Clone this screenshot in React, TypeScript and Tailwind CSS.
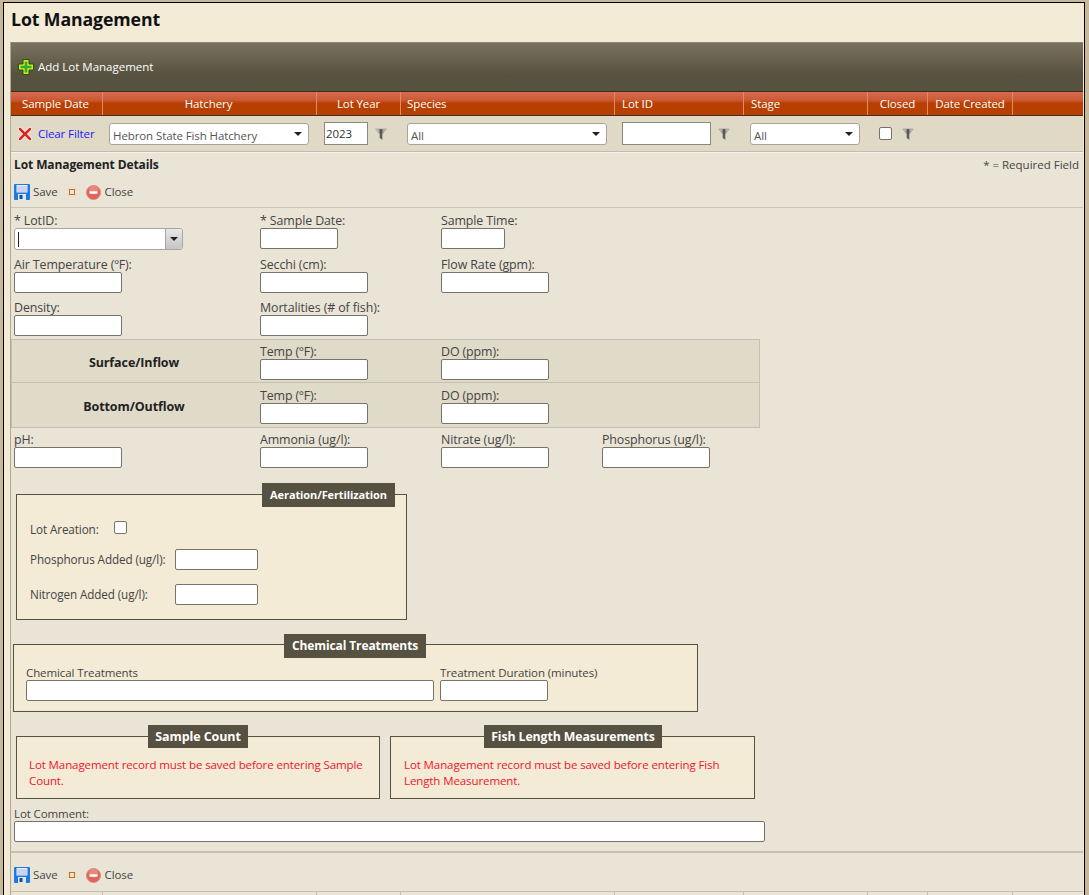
import React from "react";

const font = { fontFamily: '"Open Sans", "Noto Sans", sans-serif', letterSpacing: "-0.1px" };

function Funnel() {
  return (
    <svg width="12" height="12" viewBox="0 0 12 12">
      <defs>
        <linearGradient id="fg" x1="0" x2="1" y1="0" y2="0">
          <stop offset="0" stopColor="#ece8dc" />
          <stop offset="0.3" stopColor="#aaaaaa" />
          <stop offset="0.5" stopColor="#3e3e3e" />
          <stop offset="0.7" stopColor="#aaaaaa" />
          <stop offset="1" stopColor="#e4e0d4" />
        </linearGradient>
      </defs>
      <path d="M0.5 1H11.5L7.2 6V11.5L4.8 10V6Z" fill="url(#fg)" stroke="#8a877d" strokeWidth="0.5" />
    </svg>
  );
}

function SaveIcon() {
  return (
    <svg width="16" height="16" viewBox="0 0 16 16" className="shrink-0">
      <rect x="0" y="0" width="16" height="16" rx="1" fill="#1d7be0" />
      <rect x="2.5" y="1" width="11" height="7.5" fill="#eef1fb" />
      <path d="M3 3h10M3 5h10M3 7h10" stroke="#a9b4e6" strokeWidth="1" />
      <rect x="4" y="10" width="8" height="6" fill="#dfe7f5" />
      <rect x="5.5" y="11" width="3" height="4" fill="#124a9c" />
    </svg>
  );
}

function CloseIcon() {
  return (
    <svg width="15" height="15" viewBox="0 0 15 15" className="shrink-0">
      <circle cx="7.5" cy="7.5" r="7" fill="#e0645a" stroke="#d98a80" strokeWidth="1" />
      <circle cx="7.5" cy="5" r="4.5" fill="#f2a89e" opacity="0.5" />
      <rect x="3.5" y="6.3" width="8" height="2.4" fill="#ffffff" />
    </svg>
  );
}

function Actions() {
  return (
    <div className="flex items-center h-5 text-[#444]">
      <SaveIcon />
      <span className="ml-[3px]">Save</span>
      <span className="ml-[11px] w-[4px] h-[4px] border border-[#d9670f] box-content" />
      <span className="ml-[11px] flex"><CloseIcon /></span>
      <span className="ml-[4px]">Close</span>
    </div>
  );
}

function Caret() {
  return <span className="w-0 h-0 border-l-[4px] border-r-[4px] border-t-[4px] border-l-transparent border-r-transparent border-t-[#222]" />;
}

function Sel({ w, text }: { w: string; text: string }) {
  return (
    <div className={`${w} h-[22px] bg-white border border-[#aaa59a] rounded-[3px] flex items-center justify-between pl-[3px] pr-[6px] text-[#555]`}>
      <span className="pt-[5px] whitespace-nowrap">{text}</span>
      <Caret />
    </div>
  );
}

function Field({ label, w, className = "", small = false }: { label: string; w: string; className?: string; small?: boolean }) {
  return (
    <div className={`flex flex-col ${className}`}>
      <span className={`${small ? "text-[11.5px]" : "text-[12.4px]"} leading-[13px] h-[8px] text-[#444] whitespace-nowrap relative z-10 -translate-y-[6px]`}>{label}</span>
      <Input w={w} />
    </div>
  );
}

function Input({ w }: { w: string }) {
  return <div className={`${w} h-[21px] bg-white border border-[#77736a] rounded-[2px] box-border`} />;
}

function Legend({ text, className }: { text: string; className: string }) {
  return (
    <div className={`absolute bg-[#565140] text-white font-bold flex items-center justify-center whitespace-nowrap ${className}`}>
      {text}
    </div>
  );
}

const headers: [string, string, string][] = [
  ["Sample Date", "w-[92px]", "justify-center pr-[2px]"],
  ["Hatchery", "w-[214px]", "justify-center pr-[2px]"],
  ["Lot Year", "w-[84px]", "justify-center"],
  ["Species", "w-[214px]", "justify-start pl-[6px]"],
  ["Lot ID", "w-[129px]", "justify-start pl-[7px]"],
  ["Stage", "w-[124px]", "justify-start pl-[7px]"],
  ["Closed", "w-[60px]", "justify-center"],
  ["Date Created", "w-[85px]", "justify-center"],
];

export default function App() {
  return (
    <div className="w-[1089px] h-[895px] overflow-hidden bg-[#c7b998] pl-[3px] pt-[2px] text-[11.5px]" style={font}>
      <div className="w-[1082px] h-[893px] border-l border-t border-r border-black bg-[#f3ebd6] overflow-hidden">
        <div className="h-[39px] pl-[7px] pt-[4px] text-[17.7px] leading-[24px] font-bold text-[#111]">Lot Management</div>
        <div className="ml-[6px] w-[1073px] border-l border-[#b0a890]">
          {/* toolbar */}
          <div className="h-[49px] bg-[linear-gradient(#7a7260_0%,#6a6350_30%,#575140_65%,#575140_100%)] border-t border-[#8c8572] flex items-center pl-[7px] text-white">
            <svg width="16" height="16" viewBox="0 0 16 16" className="shrink-0">
              <path d="M5 0.5H11V5H15.5V11H11V15.5H5V11H0.5V5H5Z" fill="#d6e81f" stroke="#24500a" strokeWidth="1" />
              <path d="M6.7 2.5H9.3V6.7H13.5V9.3H9.3V13.5H6.7V9.3H2.5V6.7H6.7Z" fill="#2fae33" />
            </svg>
            <span className="ml-[4px] tracking-normal">Add Lot Management</span>
          </div>
          {/* header */}
          <div className="flex h-[25px] border-y border-[#3f2e20] bg-[linear-gradient(#d56c4c_0%,#cc5a36_35%,#b73f00_50%,#b73f00_100%)] text-white">
            {headers.map(([t, w, a]) => (
              <div key={t} className={`${w} shrink-0 flex items-center ${a} border-r border-[#e08a68] whitespace-nowrap`}>{t}</div>
            ))}
          </div>
          {/* filter */}
          <div className="flex h-[36px] bg-[#e0d9c5] border-b border-[#c0bcb0] items-center">
            <div className="w-[92px] shrink-0 flex items-center pl-[7px] text-[#1a1aff]">
              <svg width="14" height="14" viewBox="0 0 14 14" className="shrink-0">
                <path d="M2 2L12 12M12 2L2 12" stroke="#ffffff" strokeWidth="4" strokeLinecap="round" />
                <path d="M2 2L12 12M12 2L2 12" stroke="#d8281f" strokeWidth="2.6" strokeLinecap="round" />
              </svg>
              <span className="ml-[6px] whitespace-nowrap">Clear Filter</span>
            </div>
            <div className="w-[214px] shrink-0 pl-[6px]"><Sel w="w-[200px]" text="Hebron State Fish Hatchery" /></div>
            <div className="w-[84px] shrink-0 flex items-center pl-[7px]">
              <div className="w-[44px] h-[23px] bg-white border border-[#8c887c] flex items-center pl-[1px] text-[#333]">2023</div>
              <span className="ml-[7px] flex"><Funnel /></span>
            </div>
            <div className="w-[214px] shrink-0 pl-[6px]"><Sel w="w-[200px]" text="All" /></div>
            <div className="w-[129px] shrink-0 flex items-center pl-[7px]">
              <div className="w-[89px] h-[23px] bg-white border border-[#8c887c]" />
              <span className="ml-[7px] flex"><Funnel /></span>
            </div>
            <div className="w-[124px] shrink-0 pl-[6px]"><Sel w="w-[110px]" text="All" /></div>
            <div className="w-[60px] shrink-0 flex items-center pl-[11px]">
              <div className="w-[13px] h-[13px] bg-white border border-[#77736a] rounded-[2px]" />
              <span className="ml-[10px] flex"><Funnel /></span>
            </div>
          </div>
          {/* details */}
          <div className="h-[739px] bg-[#eae4d7] border-t border-[#f6f3ea] pl-[3px] text-[#444]">
            <div className="flex justify-between pr-[4px] pt-[3px] h-[21px] items-center">
              <span className="font-bold text-[12px] text-[#222]">Lot Management Details</span>
              <span className="tracking-normal">* = Required Field</span>
            </div>
            <div className="mt-[8px]"><Actions /></div>
            <div className="-ml-[3px] mt-[5px] h-px bg-[#c8c4b8]" />

            <div className="flex mt-[12px]">
              <div className="w-[246px] flex flex-col">
                <span className="text-[12.4px] h-[8px] -translate-y-[6px] leading-[13px] relative z-10">* LotID:</span>
                <div className="w-[169px] h-[22px] bg-white border border-[#aaa59a] rounded-[3px] flex items-center justify-between box-border">
                  <span className="ml-[3px] w-px h-[15px] bg-[#222]" />
                  <span className="w-[17px] h-full bg-[linear-gradient(#e8e8e8,#c4c4c4)] border-l border-[#aaa59a] flex items-center justify-center rounded-r-[3px]"><Caret /></span>
                </div>
              </div>
              <Field className="w-[181px]" label="* Sample Date:" w="w-[78px]" />
              <Field label="Sample Time:" w="w-[64px]" />
            </div>
            <div className="flex mt-[14px]">
              <Field className="w-[246px]" label="Air Temperature (ºF):" w="w-[108px]" />
              <Field className="w-[181px]" label="Secchi (cm):" w="w-[108px]" />
              <Field label="Flow Rate (gpm):" w="w-[108px]" />
            </div>
            <div className="flex mt-[14px]">
              <Field className="w-[246px]" label="Density:" w="w-[108px]" />
              <Field label="Mortalities (# of fish):" w="w-[108px]" />
            </div>

            <div className="-ml-[3px] mt-[3px] w-[749px] bg-[#e0dac8] border border-[#c4c0b4]">
              <div className="flex h-[43px] items-center border-b border-[#c4c0b4]">
                <div className="w-[248px] pr-[4px] pt-[4px] text-center font-bold text-[12.5px] text-[#222]">Surface/Inflow</div>
                <Field className="w-[181px] pt-[9px]" label="Temp (ºF):" w="w-[108px]" />
                <Field className="pt-[9px]" label="DO (ppm):" w="w-[108px]" />
              </div>
              <div className="flex h-[44px] items-center">
                <div className="w-[248px] pr-[4px] pt-[4px] text-center font-bold text-[12.5px] text-[#222]">Bottom/Outflow</div>
                <Field className="w-[181px] pt-[9px]" label="Temp (ºF):" w="w-[108px]" />
                <Field className="pt-[9px]" label="DO (ppm):" w="w-[108px]" />
              </div>
            </div>

            <div className="flex mt-[11px]">
              <Field className="w-[246px]" label="pH:" w="w-[108px]" />
              <Field className="w-[181px]" label="Ammonia (ug/l):" w="w-[108px]" />
              <Field className="w-[161px]" label="Nitrate (ug/l):" w="w-[108px]" />
              <Field label="Phosphorus (ug/l):" w="w-[108px]" />
            </div>

            {/* aeration */}
            <div className="relative ml-[2px] mt-[26px] w-[391px] h-[126px] bg-[#f3ebd6] border border-[#565140] pl-[13px] pt-[24px] text-[11.7px]">
              <Legend text="Aeration/Fertilization" className="text-[11px] left-[245px] -top-[12px] w-[133px] h-[24px]" />
              <div className="flex items-center h-[16px]">
                <span className="w-[84px] pt-[6px]">Lot Areation:</span>
                <div className="w-[13px] h-[13px] bg-white border border-[#77736a] rounded-[2px]" />
              </div>
              <div className="flex items-center mt-[14px]">
                <span className="w-[145px] whitespace-nowrap">Phosphorus Added (ug/l):</span>
                <Input w="w-[83px]" />
              </div>
              <div className="flex items-center mt-[14px]">
                <span className="w-[145px] whitespace-nowrap">Nitrogen Added (ug/l):</span>
                <Input w="w-[83px]" />
              </div>
            </div>

            {/* chemical */}
            <div className="relative -ml-[1px] mt-[24px] w-[685px] h-[68px] bg-[#f3ebd6] border border-[#565140] pl-[12px] pt-[27px] flex">
              <Legend text="Chemical Treatments" className="text-[12px] left-[270px] -top-[11px] w-[142px] h-[24px]" />
              <Field small className="w-[414px]" label="Chemical Treatments" w="w-[408px]" />
              <Field small label="Treatment Duration (minutes)" w="w-[108px]" />
            </div>

            {/* sample count row */}
            <div className="flex mt-[24px] ml-[2px]">
              <div className="relative w-[364px] h-[63px] bg-[#f3ebd6] border border-[#565140] pl-[12px] pr-[8px] pt-[20px] text-[#f0142d] leading-[16px]">
                <Legend text="Sample Count" className="text-[12.5px] left-[131px] -top-[12px] w-[100px] h-[23px]" />
                Lot Management record must be saved before entering Sample Count.
              </div>
              <div className="relative ml-[10px] w-[365px] h-[63px] bg-[#f3ebd6] border border-[#565140] pl-[13px] pr-[20px] pt-[20px] text-[#f0142d] leading-[16px]">
                <Legend text="Fish Length Measurements" className="text-[12.3px] left-[93px] -top-[12px] w-[178px] h-[23px]" />
                Lot Management record must be saved before entering Fish Length Measurement.
              </div>
            </div>

            <div className="mt-[14px]">
              <Field small label="Lot Comment:" w="w-[751px]" />
            </div>
            <div className="-ml-[3px] mt-[9px] h-[2px] bg-[#c4c0b8]" />
            <div className="mt-[12px]"><Actions /></div>
          </div>
          {/* grid footer */}
          <div className="flex h-[4px] border-t border-[#c4c0b4] bg-[#eae4d7]">
            {headers.map(([t, w]) => (
              <div key={t} className={`${w} shrink-0 border-r border-[#c4c0b4]`} />
            ))}
          </div>
        </div>
      </div>
    </div>
  );
}
